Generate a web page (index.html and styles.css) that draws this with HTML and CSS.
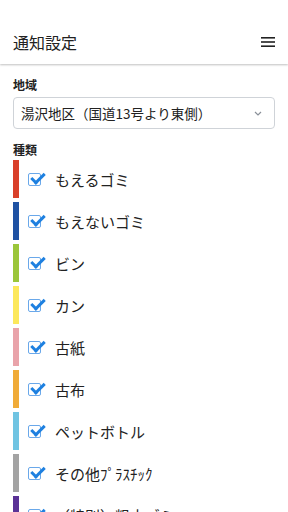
FILE: index.html
```html
<!DOCTYPE html>
<html lang="ja">
<head>
	<meta charset="utf-8">
	<title>通知設定</title>
	<link rel="stylesheet" href="styles.css">
</head>
<body>
	<header class="bar">
		<h1 class="bar-title">通知設定</h1>
		<svg class="menu" width="16" height="12" viewBox="0 0 16 12">
			<rect x="1" y="1" width="14" height="1.6" fill="#222"/>
			<rect x="1" y="5.2" width="14" height="1.6" fill="#222"/>
			<rect x="1" y="9.4" width="14" height="1.6" fill="#222"/>
		</svg>
	</header>

	<main class="content">
		<div class="label">地域</div>
		<div class="select">
			<span>湯沢地区（国道13号より東側）</span>
			<svg class="chevron" width="8" height="5" viewBox="0 0 8 5">
				<path d="M1 1 L4 4 L7 1" fill="none" stroke="#8a9099" stroke-width="1.2"/>
			</svg>
		</div>

		<div class="label kind">種類</div>
		<ul class="kinds">
			<li class="kind-row"><span class="swatch c-red"></span><span class="check"></span><span>もえるゴミ</span></li>
			<li class="kind-row"><span class="swatch c-blue"></span><span class="check"></span><span>もえないゴミ</span></li>
			<li class="kind-row"><span class="swatch c-green"></span><span class="check"></span><span>ビン</span></li>
			<li class="kind-row"><span class="swatch c-yellow"></span><span class="check"></span><span>カン</span></li>
			<li class="kind-row"><span class="swatch c-pink"></span><span class="check"></span><span>古紙</span></li>
			<li class="kind-row"><span class="swatch c-orange"></span><span class="check"></span><span>古布</span></li>
			<li class="kind-row"><span class="swatch c-sky"></span><span class="check"></span><span>ペットボトル</span></li>
			<li class="kind-row"><span class="swatch c-gray"></span><span class="check"></span><span>その他ﾌﾟﾗｽﾁｯｸ</span></li>
			<li class="kind-row"><span class="swatch c-purple"></span><span class="check"></span><span>（特別）粗大ゴミ</span></li>
		</ul>
	</main>
</body>
</html>
```

FILE: styles.css
```css
* {
	box-sizing: border-box;
}

body {
	margin: 0;
	width: 288px;
	height: 512px;
	overflow: hidden;
	background: #fff;
	color: #222;
	font-family: "Noto Sans CJK JP", "Noto Sans", sans-serif;
}

.bar {
	height: 64px;
	padding: 20px 12px 0 13px;
	display: flex;
	align-items: center;
	justify-content: space-between;
	box-shadow: 0 1px 2px rgba(0, 0, 0, 0.25);
}

.bar-title {
	margin: 0;
	font-size: 16px;
	font-weight: 400;
}

.content {
	padding: 12px 13px 0 13px;
}

.label {
	font-size: 12px;
	font-weight: 700;
	line-height: 18px;
}

.select {
	margin-top: 3px;
	height: 32px;
	border: 1px solid #cfd3d8;
	border-radius: 4px;
	padding: 0 12px 0 7px;
	display: flex;
	align-items: center;
	justify-content: space-between;
	font-size: 13.5px;
}

.kind {
	margin-top: 12px;
}

.kinds {
	list-style: none;
	margin: 1px 0 0;
	padding: 0;
	display: flex;
	flex-direction: column;
	gap: 4px;
}

.kind-row {
	height: 38px;
	display: flex;
	align-items: center;
	font-size: 15px;
}

.swatch {
	width: 6px;
	height: 100%;
	margin-right: 9px;
}

.check {
	width: 13px;
	height: 13px;
	margin-right: 14px;
	border: 1.5px solid #6aa8ea;
	border-radius: 2px;
	position: relative;
}

.check::after {
	content: "";
	position: absolute;
	left: 1.5px;
	top: -1px;
	width: 11px;
	height: 5px;
	border-left: 3px solid #1e80e0;
	border-bottom: 3px solid #1e80e0;
	transform: rotate(-45deg);
}

.c-red { background: #d9402a; }
.c-blue { background: #1f52a3; }
.c-green { background: #9bc63a; }
.c-yellow { background: #fce85c; }
.c-pink { background: #e9a3aa; }
.c-orange { background: #f0ab38; }
.c-sky { background: #70c4e2; }
.c-gray { background: #a3a3a3; }
.c-purple { background: #5a3296; }
```
